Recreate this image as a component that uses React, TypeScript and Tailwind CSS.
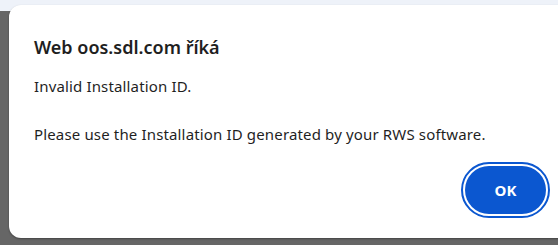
export default function App() {
  return (
    <div className="relative h-[245px] w-[558px] overflow-hidden bg-[#666666] font-['Noto_Sans',sans-serif]">
      {/* browser chrome strip behind the overlay */}
      <div className="h-[11px] bg-[#eef2f9]" />

      {/* alert dialog */}
      <div className="absolute left-[9px] top-[5px] flex h-[233px] w-[570px] flex-col rounded-l-[12px] bg-white pl-[25px] pr-[40px] shadow-[0_1px_2px_rgba(0,0,0,0.35)]">
        <h1 className="mt-[30px] text-[18px] font-semibold leading-[24px] text-[#1f1f1f]">
          Web oos.sdl.com říká
        </h1>
        <p className="mt-[15px] whitespace-pre-line text-[15px] leading-[24px] tracking-[0.15px] text-[#1f1f1f]">
          {'Invalid Installation ID.\n\nPlease use the Installation ID generated by your RWS software.'}
        </p>
        <div className="mt-auto mb-[20px] flex justify-end">
          <div className="mr-[-11px] rounded-full border-2 border-[#0b57d0] p-[2px]">
            <button className="flex h-[48px] w-[81px] items-center justify-center rounded-full bg-[#0b57d0] text-[15px] font-bold text-white">
              OK
            </button>
          </div>
        </div>
      </div>
    </div>
  )
}
